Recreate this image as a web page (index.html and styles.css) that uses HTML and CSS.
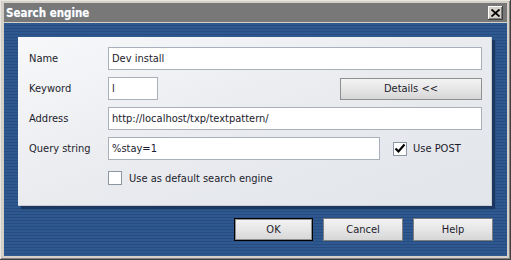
FILE: index.html
```html
<!DOCTYPE html>
<html>
<head>
<meta charset="utf-8">
<link rel="stylesheet" href="styles.css">
</head>
<body>
<div class="window">
  <div class="titlebar">
    <span class="title">Search engine</span>
    <span class="close"><svg width="9" height="8" viewBox="0 0 9 8"><path d="M0.5 0.5 L8.5 7.5 M8.5 0.5 L0.5 7.5" stroke="#000" stroke-width="1.8" fill="none"/></svg></span>
  </div>
  <div class="client">
    <div class="panel">
      <div class="row">
        <label class="lbl">Name</label>
        <div class="input wide">Dev install</div>
      </div>
      <div class="row">
        <label class="lbl">Keyword</label>
        <div class="input short">l</div>
        <div class="spacer"></div>
        <div class="btn details">Details &lt;&lt;</div>
      </div>
      <div class="row">
        <label class="lbl">Address</label>
        <div class="input wide">http://localhost/txp/textpattern/</div>
      </div>
      <div class="row">
        <label class="lbl">Query string</label>
        <div class="input query">%stay=1</div>
        <div class="check post"><span class="box checked"><svg width="12" height="11" viewBox="0 0 12 11"><path d="M1.5 5.5 L4.5 8.5 L10.5 1.5" stroke="#000" stroke-width="2.2" fill="none"/></svg></span><span>Use POST</span></div>
      </div>
      <div class="row crow">
        <label class="lbl"></label>
        <div class="check"><span class="box"></span><span>Use as default search engine</span></div>
      </div>
    </div>
    <div class="buttons">
      <div class="btn dlg default">OK</div>
      <div class="btn dlg">Cancel</div>
      <div class="btn dlg">Help</div>
    </div>
  </div>
</div>
</body>
</html>
```

FILE: styles.css
```css
html, body {
  margin: 0;
  padding: 0;
  background: #d4d0c8;
}
body {
  font-family: "DejaVu Sans Condensed", "DejaVu Sans", sans-serif;
  font-size: 11px;
  color: #1c1c2c;
}
.window {
  width: 511px;
  height: 260px;
  box-sizing: border-box;
  padding: 3px 4px 4px 4px;
  background: #d4d0c8;
  box-shadow: inset -1px -1px 0 #404040, inset 1px 1px 0 #e8e6e0, inset -2px -2px 0 #808080;
  display: flex;
  flex-direction: column;
}
.titlebar {
  height: 19px;
  background: #787878;
  display: flex;
  align-items: center;
  justify-content: space-between;
  padding: 0 4px 0 2px;
}
.title {
  color: #fff;
  font-weight: bold;
  font-size: 11.5px;
  text-shadow: 0 0 1px #9ab;
}
.close {
  width: 15px;
  height: 14px;
  box-sizing: border-box;
  background: #d4d0c8;
  box-shadow: inset -1px -1px 0 #404040, inset 1px 1px 0 #fff, inset -2px -2px 0 #808080;
  display: flex;
  align-items: center;
  justify-content: center;
  margin-top: 1px;
}
.client {
  margin-top: 1px;
  flex: 1;
  background: repeating-linear-gradient(to bottom, #2e5990 0, #2e5990 2px, #284c80 2px, #284c80 3px);
  padding: 14px 14px 0 14px;
  display: flex;
  flex-direction: column;
}
.panel {
  width: 474px;
  height: 169px;
  box-sizing: border-box;
  background: linear-gradient(160deg, #f7f8fa 0%, #e9ebef 50%, #e2e5ea 100%);
  box-shadow: 3px 3px 1px #1d3860, inset -1px -1px 0 #c8ccd4;
  padding: 10px 10px 0 11px;
  display: flex;
  flex-direction: column;
  gap: 7px;
}
.row {
  display: flex;
  align-items: center;
  height: 23px;
}
.lbl {
  width: 79px;
  flex: none;
}
.input {
  height: 23px;
  box-sizing: border-box;
  border: 1px solid #a9b0ba;
  background: #fff;
  padding: 0 3px;
  display: flex;
  align-items: center;
  white-space: nowrap;
}
.wide { width: 374px; }
.short { width: 50px; }
.query { width: 272px; }
.spacer { flex: 1; }
.btn {
  box-sizing: border-box;
  display: flex;
  align-items: center;
  justify-content: center;
  border: 1px solid #8e8f8f;
  background: linear-gradient(to bottom, #f3f3f3 0%, #e6e6e6 50%, #d6d6d6 100%);
  color: #1c1c2c;
}
.details {
  width: 142px;
  height: 22px;
}
.check {
  display: flex;
  align-items: center;
  gap: 7px;
}
.post {
  margin-left: 13px;
  gap: 6px;
}
.box {
  width: 14px;
  height: 14px;
  box-sizing: border-box;
  border: 1px solid #8d97a3;
  background: #fff;
  display: flex;
  align-items: center;
  justify-content: center;
}
.crow {
  margin-top: 4px;
  height: 14px;
}
.buttons {
  display: flex;
  justify-content: flex-end;
  gap: 10px;
  margin-top: 12px;
}
.dlg {
  width: 80px;
  height: 23px;
  border-color: #7d7e80;
}
.dlg.default {
  width: 79px;
  border: 1px solid #000;
  box-shadow: inset 0 0 0 1px #8e8f8f;
}
```
